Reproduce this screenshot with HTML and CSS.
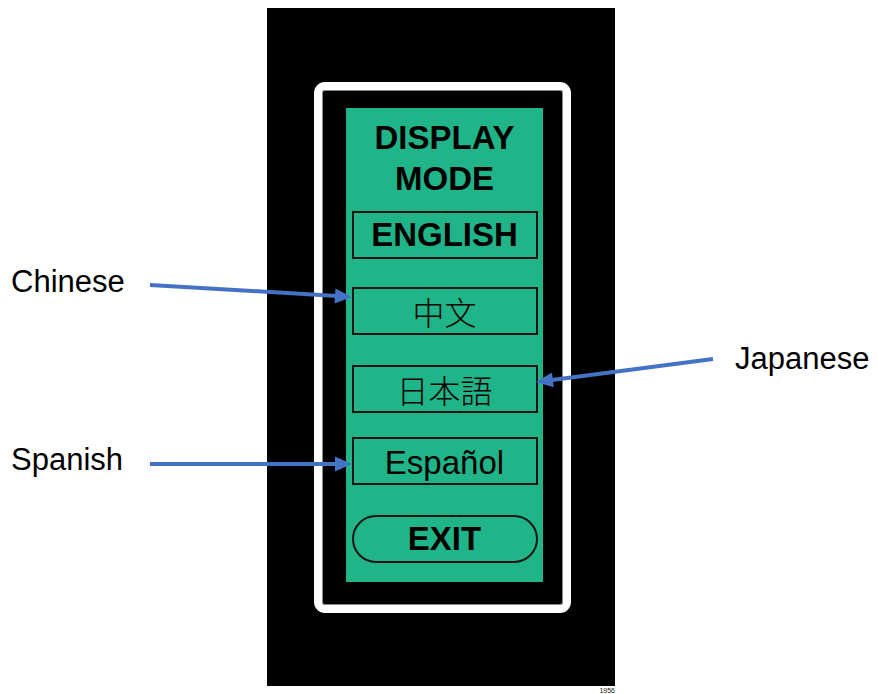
FILE: index.html
```
<!DOCTYPE html>
<html lang="en">
<head>
    <meta charset="UTF-8">
    <meta name="viewport" content="width=device-width, initial-scale=1.0">
    <title>Display Mode</title>
    <link rel="stylesheet" href="styles.css">
</head>
<body>
    <div class="stage">
        <div class="figure">
            <div class="device">
                <div class="bezel">
                    <div class="screen">
                        <h1 class="title">DISPLAY<br>MODE</h1>
                        <div class="menu">
                            <div class="opt opt-bold">ENGLISH</div>
                            <div class="opt opt-cjk" lang="zh">中文</div>
                            <div class="opt opt-cjk opt-ja" lang="ja">日本語</div>
                            <div class="opt opt-es">Español</div>
                            <div class="opt opt-bold opt-pill">EXIT</div>
                        </div>
                    </div>
                </div>
            </div>
            <div class="caption">1956</div>
        </div>
    </div>

    <!-- callouts -->
    <span class="label label-zh">Chinese</span>
    <span class="label label-ja">Japanese</span>
    <span class="label label-es">Spanish</span>
    <svg class="arrows" width="878" height="694" viewBox="0 0 878 694">
        <g stroke="#4472c4" stroke-width="4" fill="#4472c4">
            <line x1="150" y1="285" x2="337" y2="296" />
            <polygon stroke="none" points="352,297 334.6,303.5 335.4,288.5" />
            <line x1="713" y1="359" x2="552" y2="380" />
            <polygon stroke="none" points="536,382 551.9,372.4 553.8,387.2" />
            <line x1="150" y1="464" x2="337" y2="464" />
            <polygon stroke="none" points="352,464 335,456.5 335,471.5" />
        </g>
    </svg>
</body>
</html>
```
FILE: styles.css
```
body {
    margin: 0;
    width: 878px;
    height: 694px;
    position: relative;
    overflow: hidden;
    background: white;
    font-family: 'Liberation Sans', Arial, sans-serif;
    color: black;
}

.stage {
    padding: 8px 0 0 267px;
}

.figure {
    width: 348px;
}

.device {
    width: 348px;
    height: 678px;
    box-sizing: border-box;
    background: black;
    padding: 74px 44px 0 47px;
}

.bezel {
    width: 257px;
    height: 531px;
    box-sizing: border-box;
    border: 8px solid white;
    border-radius: 11px;
    box-shadow: inset 0 0 0 1px #8a8a8a;
    padding: 18px 20px 0 24px;
}

.screen {
    width: 197px;
    height: 474px;
    box-sizing: border-box;
    background: #20b589;
    padding-top: 9px;
    display: flex;
    flex-direction: column;
    align-items: center;
}

.title {
    margin: 0 0 12px;
    font-size: 33px;
    line-height: 41px;
    font-weight: bold;
    text-align: center;
}

.menu {
    display: flex;
    flex-direction: column;
    gap: 28px;
}

.opt {
    width: 186px;
    height: 48px;
    box-sizing: border-box;
    border: 2px solid #141414;
    display: flex;
    align-items: center;
    justify-content: center;
    font-size: 33px;
    line-height: 44px;
}

.opt-bold {
    font-weight: bold;
}

.opt-cjk {
    font-family: 'Noto Sans CJK JP', 'Noto Sans CJK SC', sans-serif;
    font-weight: 300;
    font-size: 32px;
}

.opt-ja {
    margin-top: 2px;
    margin-bottom: -4px;
}

.opt-es {
    padding-top: 3px;
    margin-bottom: 2px;
}

.opt-pill {
    border-radius: 24px;
}

.caption {
    font-size: 7px;
    line-height: 8px;
    text-align: right;
    margin-top: 1px;
    color: #222;
}

.label {
    position: absolute;
    font-size: 31px;
    line-height: 31px;
    white-space: nowrap;
}

.label-zh {
    left: 11px;
    top: 266px;
}

.label-ja {
    left: 735px;
    top: 343px;
}

.label-es {
    left: 11px;
    top: 444px;
}

.arrows {
    position: absolute;
    left: 0;
    top: 0;
    pointer-events: none;
}
```
